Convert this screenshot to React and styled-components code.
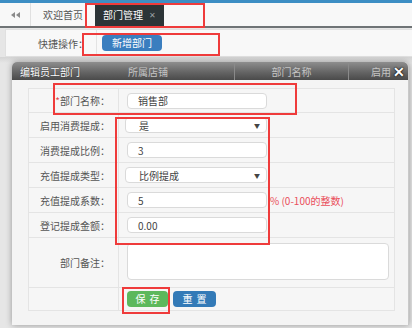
import React from "react";
import styled, { createGlobalStyle, css } from "styled-components";

const Global = createGlobalStyle`
  html, body { margin: 0; padding: 0; background: #e9e9e9; }
  body { font-family: "Noto Sans CJK SC", "Noto Sans", sans-serif; }
  * { box-sizing: border-box; }
`;

const Page = styled.div`
  position: relative;
  width: 412px;
  height: 328px;
  overflow: hidden;
  background: #e6e6e6;
  font-size: 10px;
  color: #555;
`;

const TopStrip = styled.div`
  height: 3px;
  background: #3d8ec4;
`;

const TabBar = styled.div`
  display: flex;
  height: 25px;
  background: #f8f8f8;
  border-bottom: 2px solid #6f7476;
`;

const NavButton = styled.div`
  flex: 0 0 31px;
  display: flex;
  align-items: center;
  justify-content: center;
  border-right: 1px solid #e0e0e0;
`;

const Tab = styled.div`
  flex: 0 0 auto;
  display: flex;
  align-items: center;
  justify-content: center;
  gap: 6px;
  height: 23px;
  ${(p) =>
    p.$active
      ? css`
          width: 69px;
          background: #2c3437;
          color: #fff;
        `
      : css`
          width: 64px;
          color: #555;
        `}
`;

const TabClose = styled.span`
  font-size: 8px;
  color: #9aa0a3;
`;

const Content = styled.div`
  padding: 1px 0 0 5px;
`;

const QuickBar = styled.div`
  display: flex;
  height: 28px;
  background: #f8f8f8;
  border: 1px solid #e0e0e0;
  border-right: none;
`;

const QuickLabel = styled.div`
  flex: 0 0 91px;
  display: flex;
  align-items: center;
  justify-content: flex-end;
  padding-right: 8px;
  border-right: 1px solid #e3e3e3;
`;

const QuickCell = styled.div`
  display: flex;
  align-items: center;
  padding-left: 5px;
`;

const Button = styled.button`
  height: 16px;
  padding: 0;
  border: none;
  border-radius: 4px;
  color: #fff;
  font-family: inherit;
  font-size: 10px;
  line-height: 16px;
  letter-spacing: ${(p) => (p.$spaced ? "4px" : "0")};
  text-indent: ${(p) => (p.$spaced ? "4px" : "0")};
  width: ${(p) => p.$w}px;
  background: ${(p) => p.$color};
`;

const ShadowGap = styled.div`
  height: 6px;
  background: linear-gradient(#d4d4d4, #e6e6e6);
`;

const Modal = styled.div`
  position: absolute;
  left: 12px;
  top: 62px;
  width: 397px;
  height: 263px;
  display: flex;
  flex-direction: column;
  background: #f4f4f4;
  border-radius: 5px 5px 0 0;
  border-right: 1px solid #c9c9c9;
  box-shadow: 0 0 6px rgba(0, 0, 0, 0.35);
`;

const ModalHeader = styled.div`
  position: relative;
  height: 18px;
  display: flex;
  align-items: center;
  border-radius: 5px 5px 0 0;
  background: linear-gradient(#8e8e8e 0%, #666 55%, #4a4a4a 100%);
  color: #fff;
`;

const Title = styled.div`
  flex: 0 0 80px;
  padding-left: 8px;
  color: #fff;
  text-shadow: 0 0 1px #222;
`;

const GhostCol = styled.div`
  flex: 0 0 ${(p) => p.$w}px;
  height: 100%;
  display: flex;
  align-items: center;
  justify-content: ${(p) => p.$align || "center"};
  padding-left: ${(p) => p.$pl || 0}px;
  color: #c4c4c4;
  border-right: ${(p) => (p.$sep ? "1px solid #8a8a8a" : "none")};
  white-space: nowrap;
  overflow: hidden;
`;

const CloseX = styled.div`
  position: absolute;
  right: 3px;
  top: 1px;
  font-size: 14px;
  font-weight: bold;
  line-height: 16px;
  color: #fff;
  text-shadow: 0 0 2px #000, 0 0 1px #000;
`;

const ModalBody = styled.div`
  flex: 1;
  padding: 8px 13px 14px 16px;
`;

const FormTable = styled.div`
  display: grid;
  grid-template-columns: 90px 1fr;
  background: #f6f6f6;
  border: 1px solid #e4e4e4;
  border-bottom: none;
`;

const LabelCell = styled.div`
  height: ${(p) => p.$h}px;
  display: flex;
  align-items: center;
  justify-content: flex-end;
  padding-right: 8px;
  border-right: 1px solid #e4e4e4;
  border-bottom: 1px solid #e4e4e4;
  color: #555;
  white-space: nowrap;
`;

const Required = styled.span`
  color: #e5484d;
`;

const ValueCell = styled.div`
  height: ${(p) => p.$h}px;
  display: flex;
  align-items: center;
  gap: ${(p) => p.$gap || 0}px;
  padding-left: ${(p) => p.$pl ?? 8}px;
  border-bottom: 1px solid #e4e4e4;
`;

const Field = styled.div`
  position: relative;
  flex: 0 0 auto;
  width: ${(p) => p.$w || 140}px;
  height: ${(p) => p.$h || 16}px;
  display: flex;
  align-items: center;
  padding-left: ${(p) => p.$pl || 10}px;
  background: #fff;
  border: 1px solid #dadada;
  border-radius: 4px;
  color: #444;
  align-self: ${(p) => (p.$top ? "flex-start" : "center")};
  margin-top: ${(p) => (p.$top ? 5 : 0)}px;
`;

const Caret = styled.span`
  position: absolute;
  right: 6px;
  top: 3px;
  font-size: 6px;
  color: #444;
`;

const Hint = styled.span`
  color: #ea4f5b;
  white-space: nowrap;
`;

const Annotation = styled.div`
  position: absolute;
  left: ${(p) => p.$x}px;
  top: ${(p) => p.$y}px;
  width: ${(p) => p.$w}px;
  height: ${(p) => p.$h}px;
  border: 2px solid #ef3b3b;
  pointer-events: none;
`;

const DoubleArrow = () => (
  <svg width="9" height="6" viewBox="0 0 9 6">
    <polygon points="4,0 4,6 0,3" fill="#8a8a8a" />
    <polygon points="9,0 9,6 5,3" fill="#8a8a8a" />
  </svg>
);

const rows = [
  { label: "启用消费提成：", value: "是", select: true },
  { label: "消费提成比例：", value: "3" },
  { label: "充值提成类型：", value: "比例提成", select: true },
  { label: "充值提成系数：", value: "5", hint: "% (0-100的整数)" },
  { label: "登记提成金额：", value: "0.00" },
];

const annotations = [
  { x: 85, y: 3, w: 120, h: 25 },
  { x: 82, y: 33, w: 138, h: 23 },
  { x: 53, y: 83, w: 244, h: 32 },
  { x: 115, y: 117, w: 155, h: 128 },
  { x: 122, y: 287, w: 48, h: 27 },
];

export default function App() {
  return (
    <>
      <Global />
      <Page>
        <TopStrip />
        <TabBar>
          <NavButton>
            <DoubleArrow />
          </NavButton>
          <Tab>欢迎首页</Tab>
          <Tab $active>
            部门管理 <TabClose>✕</TabClose>
          </Tab>
        </TabBar>
        <Content>
          <QuickBar>
            <QuickLabel>快捷操作：</QuickLabel>
            <QuickCell>
              <Button $w={60} $color="#3a7ebf">新增部门</Button>
            </QuickCell>
          </QuickBar>
        </Content>
        <ShadowGap />

        <Modal>
          <ModalHeader>
            <Title>编辑员工部门</Title>
            <GhostCol $w={143} $sep $align="flex-start" $pl={36}>所属店铺</GhostCol>
            <GhostCol $w={114} $sep>部门名称</GhostCol>
            <GhostCol $w={44} $align="flex-start" $pl={22}>启用</GhostCol>
            <CloseX>✕</CloseX>
          </ModalHeader>
          <ModalBody>
            <FormTable>
              <LabelCell $h={24}>
                <Required>*</Required>部门名称：
              </LabelCell>
              <ValueCell $h={24}>
                <Field>销售部</Field>
              </ValueCell>
              {rows.map((r) => (
                <React.Fragment key={r.label}>
                  <LabelCell $h={25}>{r.label}</LabelCell>
                  <ValueCell $h={25} $pl={r.select ? 6 : 8} $gap={3}>
                    <Field $w={r.select ? 142 : 140} $pl={r.select ? 13 : 10}>
                      {r.value}
                      {r.select && <Caret>▼</Caret>}
                    </Field>
                    {r.hint && <Hint>{r.hint}</Hint>}
                  </ValueCell>
                </React.Fragment>
              ))}
              <LabelCell $h={50}>部门备注：</LabelCell>
              <ValueCell $h={50}>
                <Field $w={262} $h={37} $top />
              </ValueCell>
              <LabelCell $h={23} />
              <ValueCell $h={23} $gap={5}>
                <Button $w={41} $color="#5cb85c" $spaced>保存</Button>
                <Button $w={43} $color="#337ab7" $spaced>重置</Button>
              </ValueCell>
            </FormTable>
          </ModalBody>
        </Modal>

        {annotations.map((a, i) => (
          <Annotation key={i} $x={a.x} $y={a.y} $w={a.w} $h={a.h} />
        ))}
      </Page>
    </>
  );
}
